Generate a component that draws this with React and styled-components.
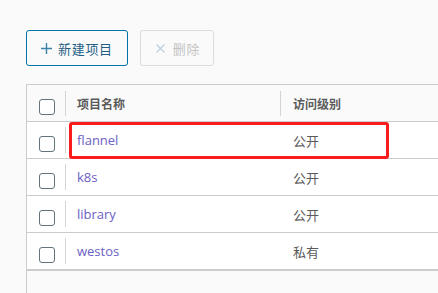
import React from "react";
import styled, { createGlobalStyle } from "styled-components";

const Global = createGlobalStyle`
  html, body { margin: 0; padding: 0; }
  body {
    background: #fafafa;
    overflow: hidden;
    font-family: "Open Sans", "Noto Sans CJK SC", sans-serif;
  }
`;

const Page = styled.div`
  display: flex;
  flex-direction: column;
  height: 100vh;
  box-sizing: border-box;
  padding: 30px 0 0 26px;
`;

const Toolbar = styled.div`
  display: flex;
  gap: 12px;
`;

const Button = styled.button`
  display: flex;
  align-items: center;
  gap: ${(p) => (p.$disabled ? "8px" : "6px")};
  height: 36px;
  box-sizing: border-box;
  padding: 0 ${(p) => (p.$disabled ? "13px" : "14px")} 0 ${(p) => (p.$disabled ? "15px" : "14px")};
  background: transparent;
  border: 1px solid ${(p) => (p.$disabled ? "#dcdcdc" : "#0072a3")};
  border-radius: 3px;
  color: ${(p) => (p.$disabled ? "#c4c4c4" : "#1f5f86")};
  font-family: "Noto Sans CJK SC", sans-serif;
  font-size: 13px;
  letter-spacing: 0.7px;
  cursor: ${(p) => (p.$disabled ? "not-allowed" : "pointer")};
`;

const Grid = styled.div`
  flex: 1;
  display: flex;
  flex-direction: column;
  margin-top: 18px;
  border-left: 1px solid #cccccc;
  border-top: 1px solid #cccccc;
  min-height: 0;
`;

const Row = styled.div`
  position: relative;
  display: flex;
  flex-shrink: 0;
  height: 37px;
  box-sizing: border-box;
  border-bottom: 1px solid #cccccc;
  background: ${(p) => (p.$header ? "#fafafa" : "#ffffff")};
`;

const CheckCell = styled.div`
  width: 38px;
  box-sizing: border-box;
  padding: 14px 0 0 12px;
`;

const Checkbox = styled.span`
  display: block;
  width: 16px;
  height: 16px;
  box-sizing: border-box;
  border: 1px solid #63737a;
  border-radius: 3px;
  background: #ffffff;
`;

const Divider = styled.div`
  width: 1px;
  margin: ${(p) => (p.$header ? "6px 0 5px" : "5px 0")};
  background: ${(p) => (p.$hidden ? "transparent" : "#d4d4d4")};
`;

const NameCell = styled.div`
  width: 214px;
  box-sizing: border-box;
  padding-left: 11px;
  display: flex;
  align-items: center;
`;

const LevelCell = styled.div`
  flex: 1;
  padding-left: 12px;
  display: flex;
  align-items: center;
`;

const HeadText = styled.span`
  font-family: "Noto Sans CJK SC", sans-serif;
  font-size: 12px;
  font-weight: 700;
  color: #5a5a5a;
`;

const Link = styled.a`
  font-family: "Open Sans", "Noto Sans CJK SC", sans-serif;
  font-size: 13px;
  color: #6a60c6;
  text-decoration: none;
`;

const Text = styled.span`
  font-family: "Noto Sans CJK SC", sans-serif;
  font-size: 13px;
  color: #5a5a5a;
`;

const Highlight = styled.div`
  position: absolute;
  left: 42px;
  top: 0;
  width: 320px;
  height: 37px;
  box-sizing: border-box;
  border: 3px solid #fa1c1c;
  border-radius: 3px;
  pointer-events: none;
`;

const Footer = styled.div`
  flex: 1;
  border-top: 1px solid #cccccc;
  background: #fafafa;
`;

const PlusIcon = () => (
  <svg width="11" height="11" viewBox="0 0 11 11">
    <path d="M5.5 0 V11 M0 5.5 H11" stroke="#3b82ad" strokeWidth="1.4" fill="none" />
  </svg>
);

const CloseIcon = () => (
  <svg width="9" height="9" viewBox="0 0 9 9">
    <path d="M0.5 0.5 L8.5 8.5 M8.5 0.5 L0.5 8.5" stroke="#b9cfdc" strokeWidth="1.1" fill="none" />
  </svg>
);

const projects = [
  { name: "flannel", level: "公开", marked: true },
  { name: "k8s", level: "公开" },
  { name: "library", level: "公开" },
  { name: "westos", level: "私有" },
];

export default function App() {
  return (
    <>
      <Global />
      <Page>
        <Toolbar>
          <Button>
            <PlusIcon />
            新建项目
          </Button>
          <Button $disabled>
            <CloseIcon />
            删除
          </Button>
        </Toolbar>
        <Grid>
          <Row $header>
            <CheckCell>
              <Checkbox />
            </CheckCell>
            <Divider $header />
            <NameCell>
              <HeadText>项目名称</HeadText>
            </NameCell>
            <Divider $header />
            <LevelCell>
              <HeadText>访问级别</HeadText>
            </LevelCell>
          </Row>
          {projects.map((p) => (
            <Row key={p.name}>
              <CheckCell>
                <Checkbox />
              </CheckCell>
              <Divider />
              <NameCell>
                <Link href="#">{p.name}</Link>
              </NameCell>
              <Divider $hidden />
              <LevelCell>
                <Text>{p.level}</Text>
              </LevelCell>
              {p.marked && <Highlight />}
            </Row>
          ))}
          <Footer />
        </Grid>
      </Page>
    </>
  );
}
